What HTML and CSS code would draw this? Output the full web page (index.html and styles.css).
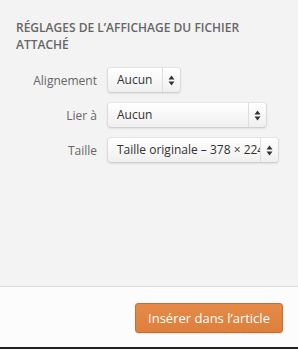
FILE: index.html
```html
<!DOCTYPE html>
<html lang="fr">
<head>
    <meta charset="UTF-8">
    <title>Réglages de l'affichage</title>
    <link rel="stylesheet" href="styles.css">
</head>
<body>
    <div class="sidebar">
        <h2>Réglages de l’affichage du fichier attaché</h2>

        <div class="setting">
            <span class="name">Alignement</span>
            <div class="select select-small">
                <span class="value">Aucun</span>
                <span class="arrows"><svg width="7" height="11" viewBox="0 0 7 11"><path d="M3.5 0.5L6.5 4.5H0.5Z M3.5 10.5L6.5 6.5H0.5Z" fill="#333"/></svg></span>
            </div>
        </div>

        <div class="setting">
            <span class="name">Lier à</span>
            <div class="select select-medium">
                <span class="value">Aucun</span>
                <span class="arrows"><svg width="7" height="11" viewBox="0 0 7 11"><path d="M3.5 0.5L6.5 4.5H0.5Z M3.5 10.5L6.5 6.5H0.5Z" fill="#333"/></svg></span>
            </div>
        </div>

        <div class="setting">
            <span class="name">Taille</span>
            <div class="select select-large">
                <span class="value">Taille originale – 378 × 224</span>
                <span class="arrows"><svg width="7" height="11" viewBox="0 0 7 11"><path d="M3.5 0.5L6.5 4.5H0.5Z M3.5 10.5L6.5 6.5H0.5Z" fill="#333"/></svg></span>
            </div>
        </div>
    </div>

    <div class="toolbar">
        <button class="button-primary">Insérer dans l’article</button>
    </div>
    <div class="bottom-bar"></div>
</body>
</html>
```

FILE: styles.css
```css
body {
    margin: 0;
    font-family: "Open Sans", sans-serif;
    background: #fcfcfc;
}
.sidebar {
    height: 287px;
    box-sizing: border-box;
    padding: 19px 16px 0 16px;
    background: #f3f3f3;
    border-bottom: 1px solid #dddddd;
}
h2 {
    margin: 0 0 14px 0;
    font-size: 12px;
    line-height: 17px;
    font-weight: 600;
    text-transform: uppercase;
    color: #666666;
}
.setting {
    display: flex;
    align-items: center;
    margin-bottom: 9px;
}
.name {
    width: 81px;
    margin-right: 10px;
    text-align: right;
    font-size: 12px;
    color: #666666;
}
.select {
    display: flex;
    height: 26px;
    box-sizing: border-box;
    border: 1px solid #dcdcdc;
    border-top-color: #e4e4e4;
    border-bottom-color: #cfcfcf;
    border-radius: 4px;
    background: linear-gradient(#ffffff, #f6f6f6 60%, #efefef);
    box-shadow: 0 1px 2px rgba(0,0,0,0.08);
    font-size: 12px;
    color: #333333;
}
.select-small { width: 74px; }
.select-medium { width: 160px; }
.select-large { width: 172px; }
.value {
    flex: 1;
    padding-left: 9px;
    line-height: 24px;
    white-space: nowrap;
    overflow: hidden;
}
.arrows {
    width: 17px;
    flex-shrink: 0;
    border-left: 1px solid #dedede;
    display: flex;
    align-items: center;
    justify-content: center;
}
.toolbar {
    height: 60px;
    display: flex;
    justify-content: flex-end;
    align-items: flex-start;
    padding: 16px 15px 0 0;
    box-sizing: border-box;
}
.button-primary {
    width: 148px;
    height: 30px;
    padding: 0;
    border: 1px solid #c96e2f;
    border-radius: 3px;
    background: linear-gradient(#e58a48, #de7f3c);
    box-shadow: 0 1px 0 rgba(0,0,0,0.1);
    color: #ffffff;
    font-family: "Open Sans", sans-serif;
    font-size: 13px;
}
.bottom-bar {
    height: 2px;
    background: #222222;
}
```
